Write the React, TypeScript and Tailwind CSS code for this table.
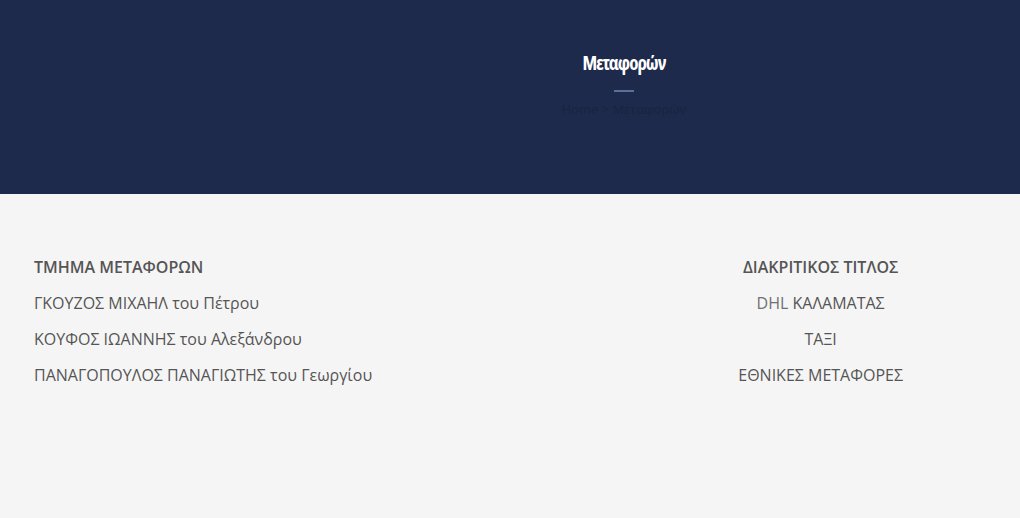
const leftRows = [
  'ΓΚΟΥΖΟΣ ΜΙΧΑΗΛ του Πέτρου',
  'ΚΟΥΦΟΣ ΙΩΑΝΝΗΣ του Αλεξάνδρου',
  'ΠΑΝΑΓΟΠΟΥΛΟΣ ΠΑΝΑΓΙΩΤΗΣ του Γεωργίου',
];

const rightRows = ['ΚΑΛΑΜΑΤΑΣ', 'ΤΑΞΙ', 'ΕΘΝΙΚΕΣ ΜΕΤΑΦΟΡΕΣ'];

const App = () => {
  return (
    <div className="min-h-[518px] bg-[#f5f5f5] font-['Open_Sans',sans-serif]">
      {/* header */}
      <div className="h-[194px] bg-[#1e2a4b] flex flex-col items-center pl-[228px] pt-[50px]">
        <h1 className="text-[19px] leading-[26px] font-bold text-white tracking-[-1px] font-stretch-[75%]">
          Μεταφορών
        </h1>
        <div className="mt-[14px] w-[20px] h-[2px] bg-[#5a6f99]" />
        <div className="mt-[8px] text-[13px] leading-[18px] text-[#19243f]">
          Home &gt; Μεταφορών
        </div>
      </div>

      {/* table */}
      <div className="flex justify-between pl-[34px] pr-[117px] pt-[62px] text-[16px] text-[#555]">
        <div className="flex flex-col">
          <div className="h-[36px] leading-[22px] font-semibold">ΤΜΗΜΑ ΜΕΤΑΦΟΡΩΝ</div>
          {leftRows.map((r) => (
            <div key={r} className="h-[36px] leading-[22px]">
              {r}
            </div>
          ))}
        </div>
        <div className="flex flex-col items-center">
          <div className="h-[36px] leading-[22px] font-semibold">ΔΙΑΚΡΙΤΙΚΟΣ ΤΙΤΛΟΣ</div>
          {rightRows.map((r, i) => (
            <div key={r} className="h-[36px] leading-[22px]">
              {i === 0 ? (
                <>
                  <span className="text-[#707070]">DHL</span> {r}
                </>
              ) : (
                r
              )}
            </div>
          ))}
        </div>
      </div>
    </div>
  );
};

export default App;
